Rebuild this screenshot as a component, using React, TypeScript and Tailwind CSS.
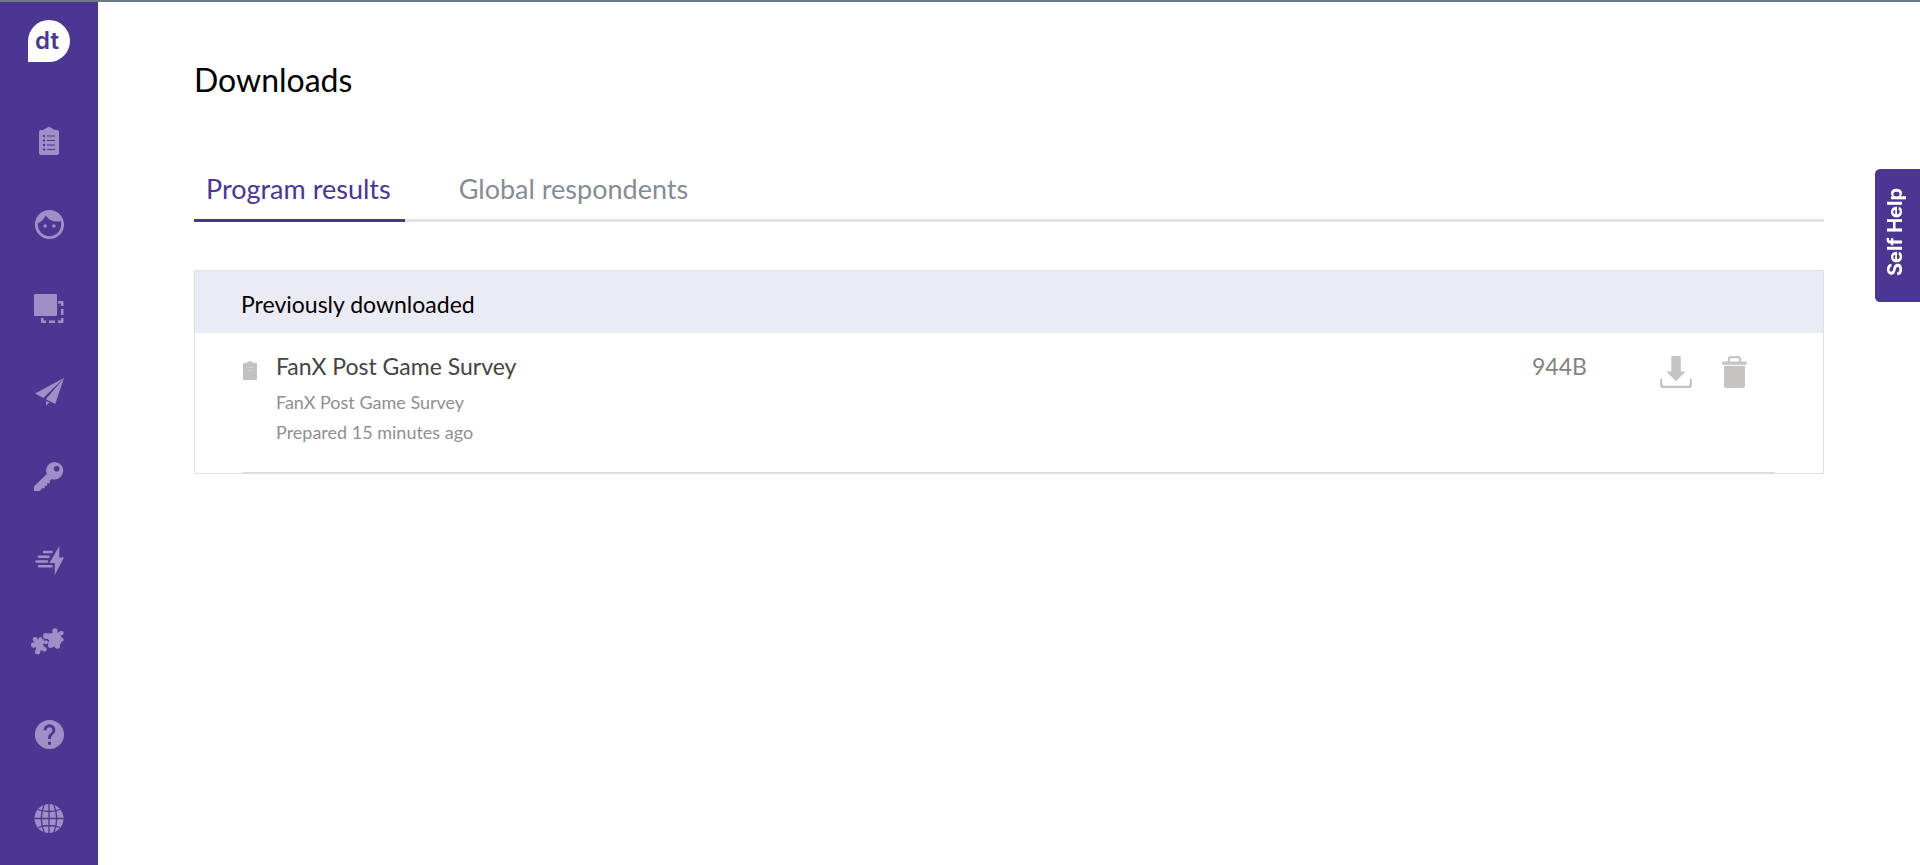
import type { ReactNode } from 'react';
import { MdFace, MdHelp } from 'react-icons/md';

function ClipboardIcon() {
  return (
    <svg width="20" height="29" viewBox="0 0 20 29" fill="currentColor" aria-hidden="true">
      <path
        fillRule="evenodd"
        d="M2 4h2l3.500-2h.7a1.900 1.900 0 0 1 3.600 0h.7l3.500 2H18a2 2 0 0 1 2 2v21a2 2 0 0 1-2 2H2a2 2 0 0 1-2-2V6a2 2 0 0 1 2-2zM4 9v2h2V9zM8 9.500v1h8v-1zM4 13.500v2h2v-2zM8 14v1h8v-1zM4 18v2h2v-2zM8 18.500v1h8v-1zM4 22.500v2h2v-2zM8 23v1h8v-1z"
      />
    </svg>
  );
}

function CopyIcon() {
  return (
    <svg width="30" height="29" viewBox="0 0 30 29" fill="currentColor" aria-hidden="true">
      <rect width="23" height="22" rx="1" />
      <path d="M24 7h4.500a1 1 0 0 1 1 1v4H27V9.500h-3zM27 15h2.500v6H27zM27 24h2.500v4a1 1 0 0 1-1 1H24v-2.500h3zM15 26.500h6V29h-6zM7 24h2.500v2.500H12V29H8a1 1 0 0 1-1-1z" />
    </svg>
  );
}

function PlaneIcon() {
  return (
    <svg width="29" height="28" viewBox="0 0 29 28" fill="currentColor" aria-hidden="true">
      <path d="M29 0 0 15.500l8.300 4.600zM29 0 10.800 21.300l9.400 4.700zM11 23l3.600 1.600L11 27.500z" />
    </svg>
  );
}

function KeyIcon() {
  return (
    <svg width="30" height="29" viewBox="0 0 30 29" fill="currentColor" aria-hidden="true">
      <path
        fillRule="evenodd"
        d="M20.800 0a8.700 8.700 0 1 1-3.200 16.900l-1.800 1.800v2.500h-2.600v2.600h-2.400v2.400H8l-2 2.800H0v-4.500L12.800 12A8.700 8.700 0 0 1 20.800 0zm1.900 4a2.800 2.800 0 1 0 0 5.600 2.800 2.800 0 0 0 0-5.600z"
      />
    </svg>
  );
}

function BoltIcon() {
  return (
    <svg width="29" height="29" viewBox="0 0 29 29" fill="currentColor" aria-hidden="true">
      <path d="M24.300 0v11.500H29L19.800 29V17h-5.300z" />
      <path
        d="M9 6h7.500M4 10.700h9.500M1.500 15.500H12M4 20.300h12.500"
        stroke="currentColor"
        strokeWidth="2.600"
        strokeLinecap="round"
      />
    </svg>
  );
}

function PuzzleIcon() {
  return (
    <svg width="36" height="32" viewBox="0 0 108 96" fill="currentColor" aria-hidden="true">
      <path d="M50 17 66 15 84 13 92 28 90 46 82 56 56 56 51 44 55 38 50 33z" />
      <circle cx="72" cy="9" r="8" />
      <circle cx="91" cy="15" r="7" />
      <circle cx="45" cy="24" r="9" />
      <circle cx="92" cy="35" r="6" />
      <circle cx="79" cy="54" r="8" />
      <circle cx="59" cy="52" r="8" />
      <path d="M10 34 38 34 41 42 36 50 40 56 40 66 16 70 14 56z" />
      <circle cx="12" cy="34" r="7" />
      <circle cx="28" cy="33" r="6" />
      <circle cx="8" cy="51" r="8" />
      <circle cx="20" cy="71" r="8" />
      <circle cx="40" cy="64" r="7" />
      <circle cx="45" cy="43" r="6" />
    </svg>
  );
}

function GlobeIcon() {
  return (
    <svg width="30" height="29" viewBox="0 0 29 29" aria-hidden="true">
      <circle cx="14.500" cy="14.500" r="14.500" fill="currentColor" />
      <g fill="none" stroke="#4b3692" strokeWidth="1.300">
        <path d="M14.500 0v29M0 14.500h29M3.500 5.500q11 4 22 0M3.500 23.500q11-4 22 0" />
        <path d="M10 0Q3.500 14.500 10 29M19 0q6.500 14.500 0 29" />
      </g>
    </svg>
  );
}

function DocumentIcon() {
  return (
    <svg width="14" height="19" viewBox="0 0 14 19" aria-hidden="true">
      <path fill="#c1c1c1" d="M1 2h2l3-1.800h2L11 2h2a1 1 0 0 1 1 1v15a1 1 0 0 1-1 1H1a1 1 0 0 1-1-1V3a1 1 0 0 1 1-1z" />
      <path stroke="#cecece" d="M4 6.500h7M4 9.500h7" />
    </svg>
  );
}

function DownloadIcon() {
  return (
    <svg width="32" height="32" viewBox="0 0 32 32" aria-hidden="true">
      <path fill="currentColor" d="M12.500 0h7a1.300 1.300 0 0 1 1.300 1.300V15.500h5L16 25.200 6.300 15.500h5V1.300A1.300 1.300 0 0 1 12.500 0z" />
      <path fill="none" stroke="currentColor" strokeWidth="2.200" d="M1.100 23v5.400A2.500 2.500 0 0 0 3.600 30.900h24.800a2.500 2.500 0 0 0 2.500-2.500V23" />
    </svg>
  );
}

function TrashIcon() {
  return (
    <svg width="25" height="32" viewBox="0 0 25 32" aria-hidden="true">
      <path fill="none" stroke="currentColor" strokeWidth="2.200" d="M7 6V3.100a2 2 0 0 1 2-2h7a2 2 0 0 1 2 2V6" />
      <rect y="5.500" width="25" height="3.200" rx="1.500" fill="currentColor" />
      <path fill="currentColor" d="M2 9.800h21V30a2 2 0 0 1-2 2H4a2 2 0 0 1-2-2z" />
    </svg>
  );
}

interface NavItem {
  label: string;
  icon: ReactNode;
}

const primaryNav: NavItem[] = [
  { label: 'Surveys', icon: <ClipboardIcon /> },
  { label: 'Respondents', icon: <MdFace size={35} /> },
  { label: 'Templates', icon: <CopyIcon /> },
  { label: 'Send', icon: <PlaneIcon /> },
  { label: 'Access', icon: <KeyIcon /> },
  { label: 'Automations', icon: <BoltIcon /> },
  { label: 'Integrations', icon: <PuzzleIcon /> },
];

const secondaryNav: NavItem[] = [
  { label: 'Help', icon: <MdHelp size={35} /> },
  { label: 'Language', icon: <GlobeIcon /> },
];

function NavList({ items }: { items: NavItem[] }) {
  return (
    <ul>
      {items.map((item) => (
        <li key={item.label}>
          <a href="#" aria-label={item.label} className="flex h-[84px] items-center justify-center">
            {item.icon}
          </a>
        </li>
      ))}
    </ul>
  );
}

export default function App() {
  return (
    <div className="flex min-h-screen flex-col border-t-2 border-[#6b7a84] bg-white font-['Lato',sans-serif]">
      <div className="flex grow">
        <aside className="flex w-[98px] shrink-0 flex-col bg-[#4b3692] pt-[18px] text-[#9f8fc6]">
          <a
            href="#"
            className="mx-auto flex size-[42px] items-center justify-center rounded-full rounded-bl-none bg-white pr-1 font-['Inter',sans-serif] text-2xl leading-8 font-semibold text-[#4b3692]"
          >
            dt
          </a>
          <nav className="mt-9 flex flex-col gap-1.5">
            <NavList items={primaryNav} />
            <NavList items={secondaryNav} />
          </nav>
        </aside>

        <main className="min-w-0 grow px-24 pt-[58px]">
          <h1 className="text-[32px] leading-10 text-black">Downloads</h1>

          <div role="tablist" className="mt-[73px] flex gap-[42px] shadow-[inset_0_-3px_0_#e0e2ea]">
            <button
              type="button"
              role="tab"
              aria-selected="true"
              className="border-b-3 border-[#4b3692] pr-3.5 pb-3.5 pl-3 text-[27px] leading-8 text-[#4b3692]"
            >
              Program results
            </button>
            <button
              type="button"
              role="tab"
              aria-selected="false"
              className="border-b-3 border-transparent pr-3.5 pb-3.5 pl-3 text-[27px] leading-8 text-[#868c96]"
            >
              Global respondents
            </button>
          </div>

          <section className="mt-12 border border-[#dcdfe3]">
            <h2 className="bg-[#ebebf5] px-[46px] pt-[19px] pb-[15px] text-[23px] leading-7 text-black">
              Previously downloaded
            </h2>
            <ul className="px-12">
              <li className="flex border-b border-[#d8dce2] pt-[19px] pb-[25px]">
                <span className="w-[33px] shrink-0 pt-[9px]">
                  <DocumentIcon />
                </span>
                <div className="min-w-0 grow">
                  <h3 className="text-[23px] leading-7 text-[#444444]">FanX Post Game Survey</h3>
                  <div className="mt-[7px] text-[18px] leading-[30px] text-[#8f8f8f]">
                    <p>FanX Post Game Survey</p>
                    <p>Prepared 15 minutes ago</p>
                  </div>
                </div>
                <span className="w-32 shrink-0 text-[23px] leading-7 text-[#828282]">944B</span>
                <div className="flex shrink-0 items-start gap-[30px] pt-1 pr-7 text-[#c6c4c3]">
                  <button type="button" aria-label="Download">
                    <DownloadIcon />
                  </button>
                  <button type="button" aria-label="Delete">
                    <TrashIcon />
                  </button>
                </div>
              </li>
            </ul>
          </section>
        </main>
      </div>

      <button
        type="button"
        className="fixed top-[169px] right-0 flex h-[133px] w-[45px] rotate-180 items-center justify-center rounded-r-[5px] bg-[#4b3692] pt-2 pl-1 font-['Inter',sans-serif] text-xl leading-6 font-bold text-white [writing-mode:vertical-rl]"
      >
        Self Help
      </button>
    </div>
  );
}
